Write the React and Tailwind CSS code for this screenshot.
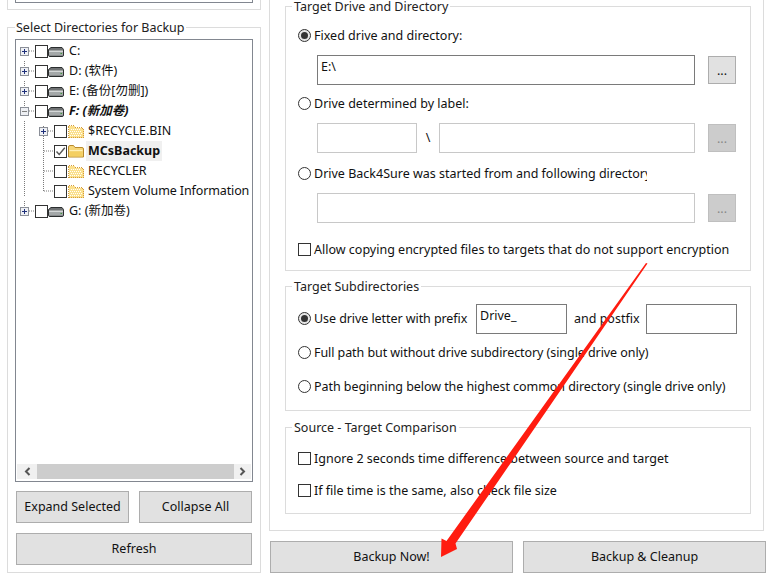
const FONT = "font-['Noto_Sans','Noto_Sans_CJK_SC',sans-serif]";

function Check({ checked }) {
  return (
    <span className="flex h-[13px] w-[13px] shrink-0 items-center justify-center border border-[#333333] bg-white">
      {checked && (
        <svg width="11" height="11" viewBox="0 0 11 11">
          <path d="M1.5 5.5 L4.2 8.5 L9.8 1.8" fill="none" stroke="#555555" strokeWidth="1.4" />
        </svg>
      )}
    </span>
  );
}

function Radio({ checked, className = "" }) {
  return (
    <span className={`flex h-[13px] w-[13px] shrink-0 items-center justify-center rounded-full border border-[#333333] ${checked ? "bg-[#e6e6e6]" : "bg-white"} ${className}`}>
      {checked && <span className="h-[7px] w-[7px] rounded-full bg-[#333333]" />}
    </span>
  );
}

function Drive() {
  return (
    <svg width="16" height="10" viewBox="0 0 16 10" className="mt-[2px] shrink-0">
      <path d="M3 0.5 H14 L15.5 2.5 V8 Q15.5 9.5 14 9.5 H2 Q0.5 9.5 0.5 8 V2.5 Z" fill="#6e7172" stroke="#2b2e2f" />
      <rect x="1" y="3.5" width="14" height="1.5" fill="#d4d7d8" />
      <rect x="1" y="5" width="14" height="3.5" fill="#a4a8a9" />
      <rect x="12.5" y="6" width="1.5" height="1" fill="#3f9a3f" />
    </svg>
  );
}

function Folder({ ghost }) {
  if (ghost) {
    return (
      <svg width="16" height="13" viewBox="0 0 16 13" className="shrink-0" shapeRendering="crispEdges">
        <path d="M0.5 12.5 V2 L2 0.5 H5.5 L7.5 2.5 H14 L15.5 4 V12.5 Z" fill="#fbe08e" stroke="#d29a3c" strokeDasharray="1 1" />
        <path d="M2 6H14M3 8H15M2 10H14M3 4H13" stroke="#ffffff" strokeDasharray="1 1" />
      </svg>
    );
  }
  return (
    <svg width="16" height="13" viewBox="0 0 16 13" className="shrink-0">
      <path d="M0.5 12 V2 Q0.5 0.5 2 0.5 H5.5 L7 2.5 H14 Q15.5 2.5 15.5 4 V12 Z" fill="#f6d678" stroke="#b98a2c" />
      <rect x="1.5" y="5" width="13" height="1.2" fill="#fff0b8" />
      <rect x="1.5" y="6.5" width="13" height="5" fill="#f4cf62" />
    </svg>
  );
}

function Expander({ open }) {
  return (
    <span className="relative h-[9px] w-[9px] shrink-0 border border-[#8b8f98] bg-[#eef0f4]">
      <span className={`absolute left-[1px] top-[3px] h-px w-[5px] ${open ? "bg-[#808080]" : "bg-[#1f2f7a]"}`} />
      {!open && <span className="absolute left-[3px] top-[1px] h-[5px] w-px bg-[#1f2f7a]" />}
    </span>
  );
}

function DriveRow({ label, open, italic }) {
  return (
    <div className="flex h-5 items-center pl-1">
      <Expander open={open} />
      <span className="ml-[6px]"><Check /></span>
      <Drive />
      <span className={`ml-[5px] whitespace-nowrap ${italic ? "font-bold italic" : ""}`}>{label}</span>
    </div>
  );
}

function DirRow({ label, expander, checked, bold, tight }) {
  return (
    <div className="flex h-5 items-center pl-[23px]">
      {expander ? <Expander /> : <span className="w-[9px] shrink-0" />}
      <span className="ml-[6px]"><Check checked={checked} /></span>
      <span className="ml-px"><Folder ghost={!checked} /></span>
      <span className={`ml-[2px] flex h-5 items-center whitespace-nowrap px-[2px] ${bold ? "bg-[#f0f0f0] font-bold" : ""} ${tight ? "tracking-[-0.12px]" : ""}`}>{label}</span>
    </div>
  );
}

function TreeLines() {
  const d = [
    "M8.5 15V17M8.5 21V37M8.5 41V57M8.5 61V77M8.5 81V157M8.5 161V166",
    "M13 11H19M13 31H19M13 51H19M13 71H19M13 171H19",
    "M27.5 86V88M27.5 96V151",
    "M32 91H38M28 111H38M28 131H38M28 151H38",
  ].join("");
  return (
    <svg className="pointer-events-none absolute left-0 top-0" width="60" height="180">
      <path d={d} stroke="#7a7a7a" strokeDasharray="1 1" fill="none" />
    </svg>
  );
}

function Btn({ children, className = "" }) {
  return (
    <button className={`flex items-center justify-center border border-[#adadad] bg-[#e1e1e1] text-[12.5px] text-[#111111] ${className}`}>
      {children}
    </button>
  );
}

function Dots({ disabled }) {
  return (
    <button className={`ml-[13px] flex h-7 w-7 shrink-0 items-center justify-center border pt-[2px] text-[12.5px] leading-none ${disabled ? "border-[#bfbfbf] bg-[#cccccc] text-[#888888]" : "border-[#adadad] bg-[#e1e1e1] text-[#111111]"}`}>
      ...
    </button>
  );
}

function Group({ title, className = "", children }) {
  return (
    <fieldset className={`flex w-[466px] min-w-0 flex-col border border-[#dcdcdc] pl-3 ${className}`}>
      <legend className="-ml-[6px] h-[18px] px-[2px] text-[12.5px] leading-[20px] text-[#222222]">{title}</legend>
      {children}
    </fieldset>
  );
}

function Option({ kind, checked, className = "", textClass = "", children }) {
  return (
    <div className={`flex h-[21px] items-center text-[12.5px] text-[#111111] ${className}`}>
      {kind === "radio" ? <Radio checked={checked} /> : <Check />}
      <span className={`ml-[3px] mt-[2px] whitespace-nowrap ${textClass}`}>{children}</span>
    </div>
  );
}

function Arrow() {
  return (
    <svg className="pointer-events-none absolute left-0 top-0" width="769" height="575" viewBox="0 0 769 575">
      <polygon points="646,263 647.5,263.5 455.5,543.5 457,549 441,557 441.5,538.5 446.5,541" fill="#ff1c10" />
    </svg>
  );
}

export default function App() {
  return (
    <div className={`relative flex h-[575px] w-[769px] overflow-hidden bg-white text-[12.5px] ${FONT}`}>
      <div className="ml-[7px] flex w-[254px] shrink-0 flex-col">
        <div className="h-[10px] shrink-0 border-x border-b border-[#dcdcdc] px-[7px]">
          <div className="h-[3px] border-x border-b border-[#828790]" />
        </div>
        <fieldset className="mt-2 flex h-[555px] w-[254px] min-w-0 flex-col border border-[#dcdcdc] px-2">
          <legend className="-ml-px h-[18px] px-px text-[12.5px] leading-[20px] text-[#222222]">Select Directories for Backup</legend>
          <div className="relative -mx-px mt-[3px] flex h-[443px] shrink-0 flex-col border border-[#828790] bg-white text-[#111111]">
            <TreeLines />
            <div className="relative min-h-0 flex-1 overflow-hidden pt-px">
              <DriveRow label="C:" />
              <DriveRow label="D: (软件)" />
              <DriveRow label="E: (备份[勿删])" />
              <DriveRow label="F: (新加卷)" open italic />
              <DirRow label="$RECYCLE.BIN" expander />
              <DirRow label="MCsBackup" checked bold />
              <DirRow label="RECYCLER" />
              <DirRow label="System Volume Information" tight />
              <DriveRow label="G: (新加卷)" />
            </div>
            <div className="mx-px mb-[2px] flex h-[15px] shrink-0 items-center bg-[#f0f0f0]">
              <span className="flex w-5 shrink-0 justify-center">
                <svg width="7" height="9" viewBox="0 0 7 9"><path d="M5.5 1 L2 4.5 L5.5 8" fill="none" stroke="#555555" strokeWidth="2" /></svg>
              </span>
              <span className="h-[15px] flex-1 bg-[#cdcdcd]" />
              <span className="flex w-[17px] shrink-0 justify-center">
                <svg width="7" height="9" viewBox="0 0 7 9"><path d="M1.5 1 L5 4.5 L1.5 8" fill="none" stroke="#555555" strokeWidth="2" /></svg>
              </span>
            </div>
          </div>
          <div className="mt-[9px] flex justify-between">
            <Btn className="h-8 w-[113px]">Expand Selected</Btn>
            <Btn className="h-8 w-[113px]">Collapse All</Btn>
          </div>
          <Btn className="mt-[10px] h-8 w-[236px]">Refresh</Btn>
        </fieldset>
      </div>

      <div className="ml-2 flex w-[498px] shrink-0 flex-col">
        <div className="-mt-[10px] flex h-[541px] w-[495px] shrink-0 flex-col border border-[#dcdcdc] pl-[15px] pt-[6px]">
          <Group title="Target Drive and Directory" className="h-[274px]">
            <Option kind="radio" checked className="mt-[10px]">Fixed drive and directory:</Option>
            <div className="mt-[9px] flex items-center pl-[19px]">
              <div className="h-[30px] w-[378px] border border-[#7a7a7a] px-[3px] text-[12.5px] leading-[22px] text-[#111111]">E:\</div>
              <Dots />
            </div>
            <Option kind="radio" className="mt-2">Drive determined by label:</Option>
            <div className="mt-[9px] flex items-center pl-[19px]">
              <div className="h-[30px] w-[100px] border border-[#c8c8c8]" />
              <span className="w-[22px] text-center text-[12.5px] text-[#111111]">\</span>
              <div className="h-[30px] w-[256px] border border-[#c8c8c8]" />
              <Dots disabled />
            </div>
            <div className="mt-[10px] flex h-[21px] w-[349px] items-center overflow-hidden text-[12.5px] text-[#111111]">
              <Radio />
              <span className="ml-[3px] mt-[2px] whitespace-nowrap">Drive Back4Sure was started from and following directory</span>
            </div>
            <div className="mt-[9px] flex items-center pl-[19px]">
              <div className="h-[30px] w-[378px] border border-[#c8c8c8]" />
              <Dots disabled />
            </div>
            <Option kind="check" className="mt-4">Allow copying encrypted files to targets that do not support encryption</Option>
          </Group>

          <Group title="Target Subdirectories" className="mt-[6px] h-[134px]">
            <div className="mt-[9px] flex h-[30px] items-center text-[12.5px] text-[#111111]">
              <Radio checked className="-mt-px" />
              <span className="ml-[3px] w-[162px] whitespace-nowrap tracking-[-0.07px]">Use drive letter with prefix</span>
              <div className="h-[30px] w-[91px] border border-[#7a7a7a] px-[3px] text-[12.5px] leading-[22px]">Drive_</div>
              <span className="ml-[7px] w-[72px] whitespace-nowrap">and postfix</span>
              <div className="h-[30px] w-[91px] border border-[#7a7a7a]" />
            </div>
            <Option kind="radio" className="mt-2" textClass="tracking-[-0.07px]">Full path but without drive subdirectory (single drive only)</Option>
            <Option kind="radio" className="mt-[13px]" textClass="tracking-[-0.06px]">Path beginning below the highest common directory (single drive only)</Option>
          </Group>

          <Group title="Source - Target Comparison" className="mt-[7px] h-[96px]">
            <Option kind="check" className="mt-3">Ignore 2 seconds time difference between source and target</Option>
            <Option kind="check" className="mt-[11px]">If file time is the same, also check file size</Option>
          </Group>
        </div>
        <div className="ml-px mt-[10px] flex gap-[10px]">
          <Btn className="h-8 w-[243px]">Backup Now!</Btn>
          <Btn className="h-8 w-[243px]">Backup &amp; Cleanup</Btn>
        </div>
      </div>
      <Arrow />
    </div>
  );
}
